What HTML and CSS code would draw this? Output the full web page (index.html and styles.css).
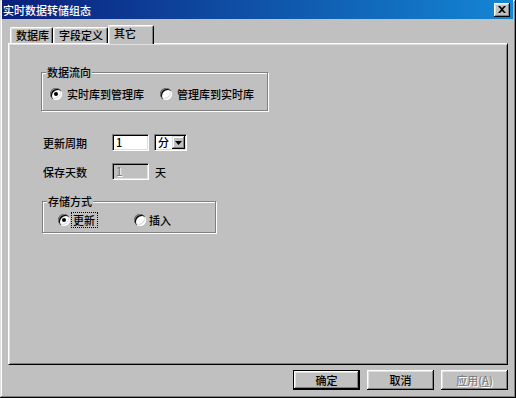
FILE: index.html
```html
<!DOCTYPE html>
<html lang="zh-CN">
<head>
    <meta charset="UTF-8">
    <title>实时数据转储组态</title>
    <link rel="stylesheet" href="styles.css">
</head>
<body>

    <div class="window">

        <!-- Title bar -->
        <div class="titlebar">
            <span class="title">实时数据转储组态</span>
            <span class="close-btn">
                <svg width="8" height="7" viewBox="0 0 8 7">
                    <path d="M0 0H2L4 2L6 0H8L5 3.5L8 7H6L4 5L2 7H0L3 3.5Z" fill="#000"/>
                </svg>
            </span>
        </div>

        <div class="dialog-body">

            <!-- Tabs -->
            <div class="tabs">
                <div class="tab tab-db">数据库</div>
                <div class="tab tab-field">字段定义</div>
                <div class="tab tab-other active">其它</div>
            </div>

            <div class="tab-panel">
                <fieldset class="group group-flow">
                    <legend>数据流向</legend>
                    <div class="group-body">
                        <label class="radio-opt opt-first"><span class="radio checked"></span>实时库到管理库</label>
                        <label class="radio-opt"><span class="radio"></span>管理库到实时库</label>
                    </div>
                </fieldset>

                <div class="field-row row-period">
                    <span class="field-label">更新周期</span>
                    <span class="textbox">1</span>
                    <span class="combo">
                        <span class="combo-value">分</span>
                        <span class="combo-arrow">
                            <svg width="7" height="4" viewBox="0 0 7 4"><path d="M0 0H7L3.5 4Z" fill="#000"/></svg>
                        </span>
                    </span>
                </div>

                <div class="field-row row-keep">
                    <span class="field-label">保存天数</span>
                    <span class="textbox disabled">1</span>
                    <span class="unit">天</span>
                </div>

                <fieldset class="group group-store">
                    <legend>存储方式</legend>
                    <div class="group-body">
                        <label class="radio-opt opt-update"><span class="radio checked"></span><span class="focus">更新</span></label>
                        <label class="radio-opt opt-insert"><span class="radio"></span>插入</label>
                    </div>
                </fieldset>
            </div>

            <!-- Dialog buttons -->
            <div class="buttons">
                <button class="btn default">确定</button>
                <button class="btn">取消</button>
                <button class="btn disabled">应用(<u>A</u>)</button>
            </div>
        </div>
    </div>

</body>
</html>
```

FILE: styles.css
```css
body {
    margin: 0;
    background: #c0c0c0;
    font-family: "Noto Sans CJK SC", "Liberation Sans", sans-serif;
    font-size: 11px;
    font-weight: 500;
    color: #000;
}

/* Window frame */
.window {
    width: 516px;
    height: 398px;
    box-sizing: border-box;
    padding: 0 3px 3px 2px;
    background: #c0c0c0;
    box-shadow: inset -1px -1px #000, inset 1px 1px #dfdfdf, inset -2px -2px #808080, inset 2px 2px #fff;
}

/* Title bar */
.titlebar {
    display: flex;
    justify-content: space-between;
    align-items: center;
    height: 19px;
    padding: 0 3px 0 1px;
    background: linear-gradient(to right, #0a1f7c, #1486d4);
    color: #fff;
}

.title {
    line-height: 12px;
}

.close-btn {
    display: flex;
    justify-content: center;
    align-items: center;
    width: 16px;
    height: 14px;
    background: #c0c0c0;
    box-shadow: inset -1px -1px #000, inset 1px 1px #fff, inset -2px -2px #808080, inset 2px 2px #dfdfdf;
}

.dialog-body {
    padding: 6px 5px 0 6px;
}

/* Tabs */
.tabs {
    display: flex;
    align-items: flex-end;
    height: 19px;
    padding-left: 2px;
    margin-bottom: -1px;
    position: relative;
    z-index: 1;
}

.tab {
    box-sizing: border-box;
    height: 16px;
    margin-bottom: 1px;
    padding-left: 5px;
    line-height: 15px;
    background: #c0c0c0;
    border-top: 1px solid #fff;
    border-left: 1px solid #fff;
    border-right: 1px solid #000;
    border-radius: 2px 2px 0 0;
    box-shadow: inset -1px 0 #808080, inset 1px 1px #dfdfdf;
}

.tab-db { width: 43px; }
.tab-field { width: 55px; }
.tab-other { width: 46px; }

.tab.active {
    height: 19px;
    margin-bottom: 0;
    line-height: 15px;
}

.tab-panel {
    box-sizing: border-box;
    height: 322px;
    padding: 22px 0 0 32px;
    border: 1px solid;
    border-color: #fff #000 #000 #fff;
    box-shadow: inset 1px 1px #dfdfdf, inset -1px -1px #808080;
}

/* Group boxes */
.group {
    box-sizing: border-box;
    min-width: 0;
    margin: 0;
    padding: 0;
    border: 1px solid #808080;
    box-shadow: inset 1px 1px #fff, 1px 1px #fff;
}

.group legend {
    margin-left: 4px;
    padding: 0 1px;
    line-height: 12px;
    background: #c0c0c0;
}

.group-body {
    display: flex;
    align-items: center;
    height: 16px;
}

.group-flow { width: 227px; }
.group-flow .group-body { padding: 8px 0 8px 8px; }

.group-store {
    width: 174px;
    margin: 15px 0 0 1px;
}
.group-store .group-body { padding: 5px 0 4px 15px; }

.radio-opt {
    display: flex;
    align-items: center;
    gap: 5px;
    line-height: 12px;
}

.opt-first { width: 110px; }
.opt-update { width: 76px; gap: 2px; }
.opt-insert { gap: 3px; }

.radio {
    position: relative;
    width: 12px;
    height: 12px;
    border-radius: 50%;
    background: #fff;
    box-shadow: inset 1px 1px #808080, inset 2px 2px #000, inset -1px -1px #fff, inset -2px -2px #dfdfdf;
}

.radio.checked::after {
    content: "";
    position: absolute;
    left: 4px;
    top: 4px;
    width: 4px;
    height: 4px;
    border-radius: 50%;
    background: #000;
}

.focus {
    display: inline-block;
    padding: 0 2px 0 1px;
    line-height: 14px;
    outline: 1px dotted #000;
}

/* Field rows */
.field-row {
    display: flex;
    align-items: center;
    padding-left: 2px;
}

.row-period { margin-top: 23px; }
.row-keep { margin-top: 12px; }

.field-label {
    width: 69px;
    line-height: 12px;
}

.textbox {
    box-sizing: border-box;
    width: 37px;
    height: 17px;
    padding: 1px 0 0 3px;
    line-height: 13px;
    background: #fff;
    border: 1px solid;
    border-color: #808080 #fff #fff #808080;
    box-shadow: inset 1px 1px #000, inset -1px -1px #dfdfdf;
}

.textbox.disabled {
    background: #c0c0c0;
    color: #808080;
    text-shadow: 1px 1px #fff;
}

.combo {
    display: flex;
    box-sizing: border-box;
    width: 33px;
    height: 17px;
    margin-left: 5px;
    padding: 1px;
    background: #fff;
    border: 1px solid;
    border-color: #808080 #fff #fff #808080;
    box-shadow: inset 1px 1px #000, inset -1px -1px #dfdfdf;
}

.combo-value {
    flex: 1;
    padding-left: 2px;
    line-height: 13px;
}

.combo-arrow {
    display: flex;
    justify-content: center;
    align-items: center;
    width: 13px;
    height: 13px;
    background: #c0c0c0;
    box-shadow: inset -1px -1px #000, inset 1px 1px #dfdfdf, inset -2px -2px #808080, inset 2px 2px #fff;
}

.unit {
    margin-left: 6px;
    line-height: 12px;
}

/* Buttons */
.buttons {
    display: flex;
    justify-content: flex-end;
    gap: 7px;
    margin-top: 5px;
}

.btn {
    width: 67px;
    height: 20px;
    padding: 0;
    border: none;
    background: #c0c0c0;
    font-family: inherit;
    font-size: 11px;
    font-weight: 500;
    color: #000;
    box-shadow: inset -1px -1px #000, inset 1px 1px #fff, inset -2px -2px #808080, inset 2px 2px #dfdfdf;
}

.btn.default {
    box-shadow: inset 0 0 0 1px #000, inset -2px -2px #000, inset 2px 2px #fff, inset -3px -3px #808080, inset 3px 3px #dfdfdf;
}

.btn.disabled {
    color: #808080;
    text-shadow: 1px 1px #fff;
}
```
